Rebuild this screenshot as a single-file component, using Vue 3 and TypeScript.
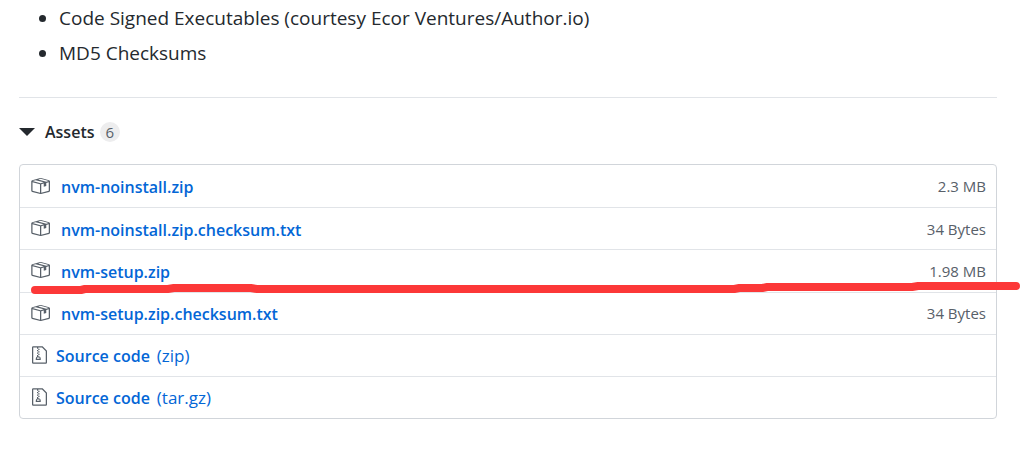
<script setup lang="ts">
interface Asset {
  name: string
  suffix?: string
  size?: string
  marked?: boolean
}

const notes: string[] = [
  'Code Signed Executables (courtesy Ecor Ventures/Author.io)',
  'MD5 Checksums',
]

const assets: Asset[] = [
  { name: 'nvm-noinstall.zip', size: '2.3 MB' },
  { name: 'nvm-noinstall.zip.checksum.txt', size: '34 Bytes' },
  { name: 'nvm-setup.zip', size: '1.98 MB', marked: true },
  { name: 'nvm-setup.zip.checksum.txt', size: '34 Bytes' },
  { name: 'Source code', suffix: '(zip)' },
  { name: 'Source code', suffix: '(tar.gz)' },
]
</script>

<template>
  <main class="release">
    <ul class="notes">
      <li v-for="note in notes" :key="note">{{ note }}</li>
    </ul>

    <details class="assets" open>
      <summary class="heading">
        <span class="caret"></span>
        <span class="title">Assets</span>
        <span class="count">{{ assets.length }}</span>
      </summary>

      <ul class="list">
        <li v-for="asset in assets" :key="asset.name + asset.suffix" class="row">
          <a href="#" class="link" :class="{ source: !asset.size }">
            <svg v-if="asset.size" class="icon" width="20" height="20" viewBox="0 0 16 16" aria-hidden="true">
              <path fill-rule="evenodd" d="M1 4.27v7.47c0 .45.3.84.75.97l6.5 1.73c.16.05.34.05.5 0l6.5-1.73c.45-.13.75-.52.75-.97V4.27c0-.45-.3-.84-.75-.97l-6.5-1.74a1.4 1.4 0 00-.5 0L1.75 3.3c-.45.13-.75.52-.75.97zm7 9.09l-6-1.59V5l6 1.61v6.75zM2 4l2.5-.67L11 5.06l-2.5.67L2 4zm13 7.77l-6 1.59V6.61l2-.55V8.5l2-.53V5.53L15 5v6.77zm-2-7.24L6.5 2.8l2-.53L15 4l-2 .53z" />
            </svg>
            <svg v-else class="icon" width="15" height="20" viewBox="0 0 12 16" aria-hidden="true">
              <path fill-rule="evenodd" d="M8.5 1H1a1 1 0 00-1 1v12a1 1 0 001 1h10a1 1 0 001-1V4.5L8.5 1zM11 14H1V2h3v1h1V2h3l3 3v9zM5 4V3h1v1H5zM4 4h1v1H4V4zm1 2V5h1v1H5zM4 6h1v1H4V6zm1 2V7h1v1H5zM4 9.28A2 2 0 003 11v1h4v-1a2 2 0 00-2-2V8H4v1.28zM6 10v1H4v-1h2z" />
            </svg>
            <span class="name">{{ asset.name }}</span>
            <span v-if="asset.suffix" class="suffix">{{ asset.suffix }}</span>
          </a>
          <small v-if="asset.size" class="size">{{ asset.size }}</small>
          <svg v-if="asset.marked" class="marker" viewBox="0 0 990 12" preserveAspectRatio="none" aria-hidden="true">
            <path d="M4 8H50L54 7H137L143 6H220L226 7H704L709 6H732L737 5H882L888 4H986" />
          </svg>
        </li>
      </ul>
    </details>
  </main>
</template>

<style>
body {
  margin: 0;
  background: #fff;
}
</style>

<style scoped>
.release {
  padding: 0 28px 0 19px;
  color: #24292e;
  font-family: "Segoe UI", "Open Sans", "Noto Sans", sans-serif;
  font-size: 17px;
  line-height: 26px;
}

.notes {
  display: grid;
  gap: 5px;
  margin: 0;
  padding: 3px 0 29px 40px;
  border-bottom: 1px solid #e1e4e8;
  font-size: 19px;
  line-height: 30px;
}

.heading {
  display: flex;
  align-items: center;
  padding: 21px 0 19px;
  list-style: none;
  cursor: pointer;
}

.heading::-webkit-details-marker {
  display: none;
}

.caret {
  margin-right: 10px;
  border: 8px solid transparent;
  border-top-color: #24292e;
  border-bottom: 0;
}

.title,
.name {
  font-size: 16px;
  font-weight: 600;
}

.count {
  margin-left: 5px;
  padding: 0 6px;
  border-radius: 20px;
  background: #ededee;
  color: #586069;
  font-size: 15px;
  line-height: 20px;
}

.list {
  display: grid;
  grid-auto-rows: 1fr;
  box-sizing: border-box;
  min-height: 255px;
  margin: 0;
  padding: 0;
  border: 1px solid #d1d5da;
  border-radius: 4px;
  list-style: none;
}

.row {
  position: relative;
  display: flex;
  align-items: center;
  justify-content: space-between;
  padding: 0 10px;
}

.row + .row {
  border-top: 1px solid #e1e4e8;
}

.link {
  display: flex;
  align-items: center;
  padding-top: 2px;
  color: #0366d6;
  text-decoration: none;
}

.icon {
  margin: 0 11px 3px 0;
  fill: #586069;
}

.source .icon {
  margin-right: 9px;
  margin-left: 2px;
}

.suffix {
  margin-left: 7px;
}

.size {
  color: #586069;
  font-size: 15px;
}

.marker {
  position: absolute;
  bottom: -2px;
  left: 11px;
  z-index: 1;
  width: calc(100% + 13px);
  height: 12px;
  overflow: visible;
  fill: none;
  stroke: #fc3838;
  stroke-width: 8px;
  stroke-linecap: round;
  stroke-linejoin: round;
  pointer-events: none;
}
</style>
